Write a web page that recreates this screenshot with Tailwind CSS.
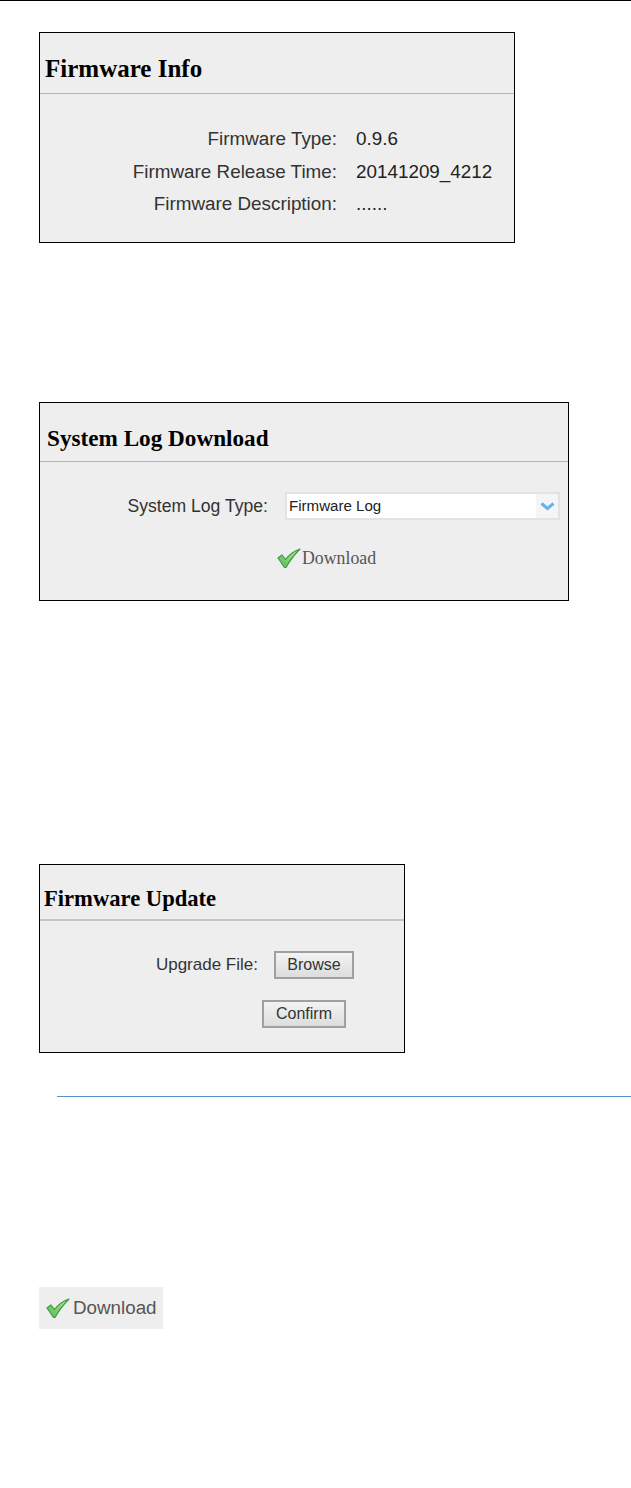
<!DOCTYPE html>
<html lang="en">
<head>
    <meta charset="UTF-8">
    <title>Firmware</title>
    <script src="https://cdn.jsdelivr.net/npm/@tailwindcss/browser@4"></script>
</head>
<body class="bg-white font-['Liberation_Sans',Arial,sans-serif]">
    <div class="w-[631px] h-[1488px] overflow-hidden">
        <div class="h-px bg-black"></div>

        <!-- Firmware Info -->
        <div class="ml-[39px] mt-[31px] w-[476px] h-[211px] border border-black bg-[#eeeeee]">
            <div class="h-[61px] border-b border-[#b5b5b5] pl-[5px] pt-[23px] font-['Liberation_Serif',serif] font-bold text-[25px] leading-[26px] text-black">Firmware Info</div>
            <div class="pt-[29px] grid grid-cols-[297px_1fr] gap-x-[19px] text-[18.85px] leading-[32.5px] text-[#222222]">
                <div class="text-right text-[#333333]">Firmware Type:</div><div>0.9.6</div>
                <div class="text-right text-[#333333]">Firmware Release Time:</div><div>20141209_4212</div>
                <div class="text-right text-[#333333]">Firmware Description:</div><div>......</div>
            </div>
        </div>

        <!-- System Log Download -->
        <div class="ml-[39px] mt-[159px] w-[530px] h-[199px] border border-black bg-[#eeeeee]">
            <div class="h-[59px] border-b border-[#b5b5b5] pl-[7px] pt-[22px] font-['Liberation_Serif',serif] font-bold text-[23.2px] leading-[26px] text-black">System Log Download</div>
            <div class="flex items-center pt-[30px]">
                <div class="w-[228px] text-right text-[17.6px] leading-[28px] text-[#333333]">System Log Type:</div>
                <div class="ml-[17px] w-[275px] h-[28px] border-2 border-[#e3e3e3] bg-white flex items-center justify-between">
                    <span class="pl-[2px] text-[15.1px] text-[#222222]">Firmware Log</span>
                    <span class="w-[22px] h-full bg-[#f5f5f5] flex items-center justify-center">
                        <svg width="15" height="9" viewBox="0 0 15 9" fill="none"><path d="M1.500 1.500l6 5 6-5" stroke="#62b4f0" stroke-width="3"/></svg>
                    </span>
                </div>
            </div>
            <div class="mt-[26px] ml-[237px] flex items-center">
                <svg width="25" height="20" viewBox="0 0 25 20">
                    <defs><linearGradient id="tickA" x1="1" y1="0" x2="0" y2="1"><stop offset="0" stop-color="#c4ee9c"/><stop offset="1" stop-color="#4fb84f"/></linearGradient></defs>
                    <path d="M1 10l4-3 3.500 4.500C12 7 17 3 23 1 18 6 13 12 9 19.500H7.500z" fill="url(#tickA)" stroke="#3f9a45" stroke-width="1.2" stroke-linejoin="round"/>
                </svg>
                <span class="font-['Liberation_Serif',serif] text-[17.8px] leading-[24px] text-[#555555]">Download</span>
            </div>
        </div>

        <!-- Firmware Update -->
        <div class="ml-[39px] mt-[263px] w-[366px] h-[189px] border border-black bg-[#eeeeee]">
            <div class="h-[56px] border-b-2 border-[#c4c4c4] pl-[4px] pt-[21px] font-['Liberation_Serif',serif] font-bold text-[22.6px] leading-[26px] text-black">Firmware Update</div>
            <div class="flex items-center pt-[30px]">
                <div class="w-[218px] text-right text-[17px] leading-[28px] text-[#333333]">Upgrade File:</div>
                <button class="ml-[16px] w-[80px] h-[28px] border-2 border-[#a0a0a0] bg-gradient-to-b from-[#f3f3f3] to-[#dddddd] text-[16px] text-[#333333]">Browse</button>
            </div>
            <div class="mt-[21px] ml-[222px]">
                <button class="w-[84px] h-[28px] border-2 border-[#a0a0a0] bg-gradient-to-b from-[#f3f3f3] to-[#dddddd] text-[16px] text-[#333333]">Confirm</button>
            </div>
        </div>

        <div class="ml-[57px] mt-[43px] h-px bg-[#5b8fc9]"></div>

        <!-- Download chip -->
        <div class="ml-[39px] mt-[190px] w-[124px] h-[42px] bg-[#eeeeee] flex items-center pl-[7px]">
            <svg width="25" height="20" viewBox="0 0 25 20">
                <defs><linearGradient id="tickB" x1="1" y1="0" x2="0" y2="1"><stop offset="0" stop-color="#c4ee9c"/><stop offset="1" stop-color="#4fb84f"/></linearGradient></defs>
                <path d="M1 10l4-3 3.500 4.500C12 7 17 3 23 1 18 6 13 12 9 19.500H7.500z" fill="url(#tickB)" stroke="#3f9a45" stroke-width="1.2" stroke-linejoin="round"/>
            </svg>
            <span class="ml-[2px] text-[18.8px] leading-[24px] text-[#555555]">Download</span>
        </div>
    </div>
</body>
</html>
